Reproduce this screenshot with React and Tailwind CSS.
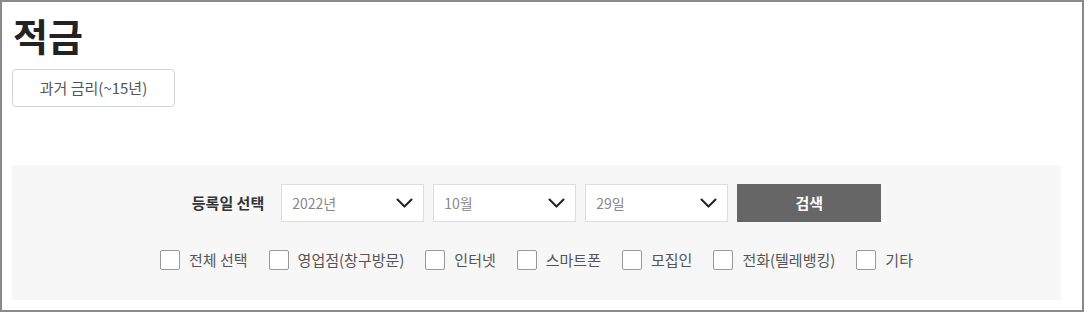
import { useState } from "react";

const channels = ["전체 선택", "영업점(창구방문)", "인터넷", "스마트폰", "모집인", "전화(텔레뱅킹)", "기타"];

function Chevron() {
  return (
    <svg width="17" height="10" viewBox="0 0 17 10" fill="none" className="shrink-0">
      <path d="M1.5 1.5 L8.5 8.5 L15.5 1.5" stroke="#222" strokeWidth="2" strokeLinecap="round" strokeLinejoin="round" />
    </svg>
  );
}

function SelectBox({ value }) {
  return (
    <button className="w-[143px] h-[38px] bg-white border border-[#dcdcdc] flex items-center justify-between pl-[10px] pr-[10px] text-[14px] text-[#888]">
      <span>{value}</span>
      <Chevron />
    </button>
  );
}

export default function App() {
  const [checked, setChecked] = useState({});

  return (
    <div
      className="w-[1084px] h-[312px] border-2 border-[#8a8a8a] bg-white pl-[10px] pr-[21px] pt-[7px]"
      style={{ fontFamily: '"Noto Sans CJK KR", "Noto Sans", sans-serif' }}
    >
      <h1 className="text-[38px] font-bold leading-[52px] text-[#222] pl-[1px]">적금</h1>
      <button className="mt-[8px] w-[163px] h-[38px] border border-[#d5d5d5] rounded-[4px] text-[15px] text-[#555] bg-white">
        과거 금리(~15년)
      </button>

      <div className="mt-[58px] h-[135px] bg-[#f7f7f7] flex flex-col items-center pt-[19px]">
        <div className="flex items-center">
          <span className="text-[15px] font-bold text-[#333] mr-[17px]">등록일 선택</span>
          <div className="flex gap-[9px]">
            <SelectBox value="2022년" />
            <SelectBox value="10월" />
            <SelectBox value="29일" />
            <button className="w-[144px] h-[38px] bg-[#666] text-white text-[15px] font-bold">검색</button>
          </div>
        </div>

        <div className="flex items-center mt-[28px] gap-[21px]">
          {channels.map((label) => (
            <label key={label} className="flex items-center gap-[9px] cursor-pointer">
              <span
                onClick={() => setChecked((c) => ({ ...c, [label]: !c[label] }))}
                className={`w-[20px] h-[20px] border border-[#999] rounded-[2px] ${checked[label] ? "bg-[#666]" : "bg-white"}`}
              />
              <span className="text-[15px] text-[#555] leading-[20px]">{label}</span>
            </label>
          ))}
        </div>
      </div>
    </div>
  );
}
